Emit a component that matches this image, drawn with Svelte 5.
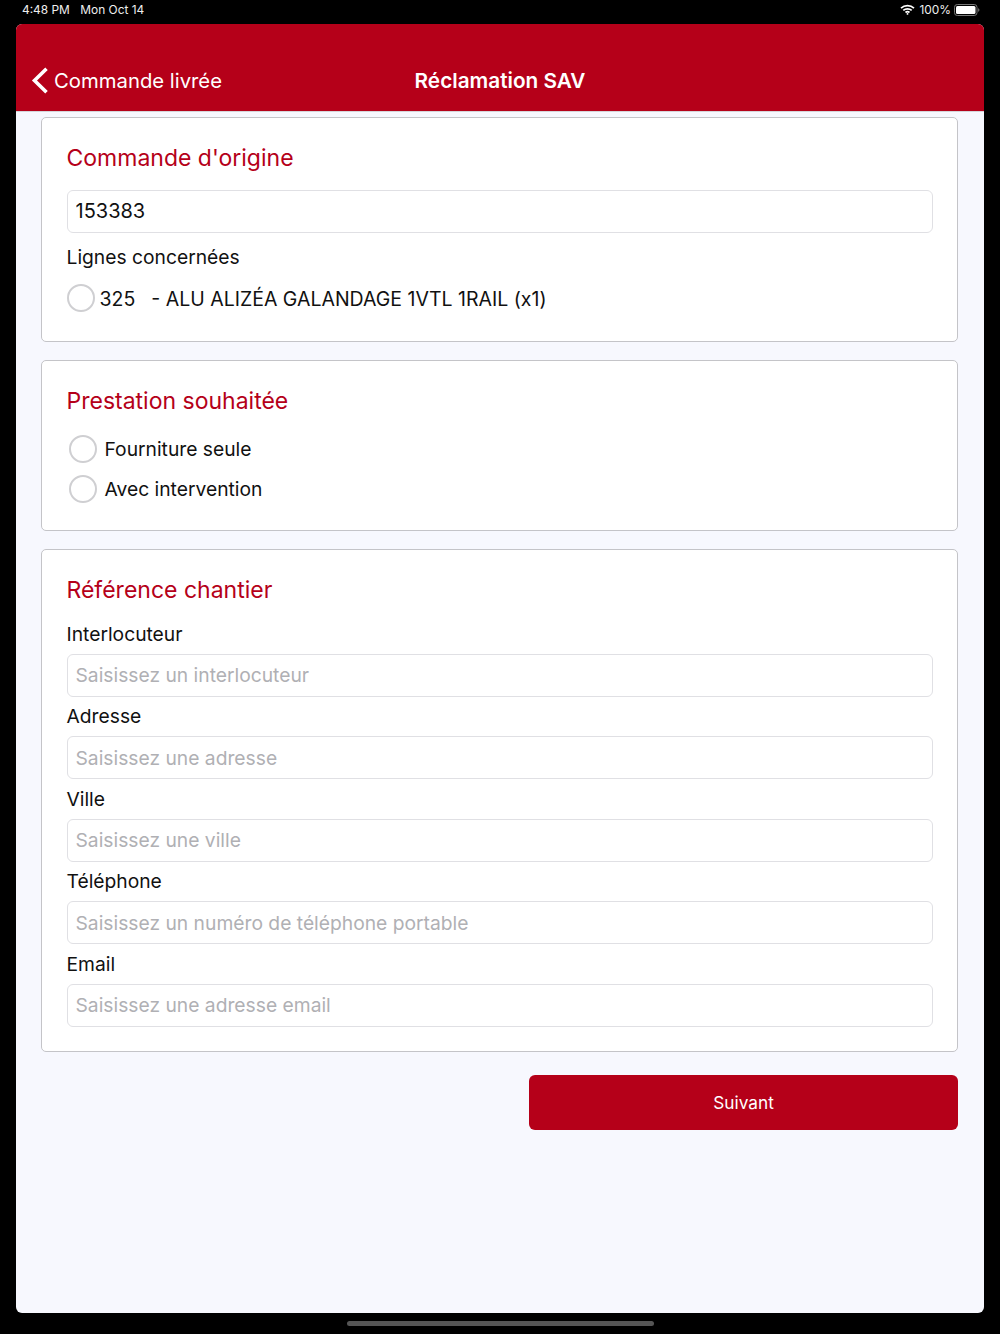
<script lang="ts">
  const lignes = [{ code: '325', label: '- ALU ALIZÉA GALANDAGE 1VTL 1RAIL (x1)' }]
  const prestations = ['Fourniture seule', 'Avec intervention']
  const champs = [
    { label: 'Interlocuteur', placeholder: 'Saisissez un interlocuteur' },
    { label: 'Adresse', placeholder: 'Saisissez une adresse' },
    { label: 'Ville', placeholder: 'Saisissez une ville' },
    { label: 'Téléphone', placeholder: 'Saisissez un numéro de téléphone portable' },
    { label: 'Email', placeholder: 'Saisissez une adresse email' },
  ]
</script>

<div class="device">
  <div class="statusbar">
    <div class="status-left">
      <span>4:48 PM</span>
      <span>Mon Oct 14</span>
    </div>
    <div class="status-right">
      <svg class="wifi" width="15" height="11" viewBox="0 0 15 11" fill="none" stroke="#fff" stroke-width="1.7">
        <path d="M1 4.1C4.6 .8 10.4 .8 14 4.1" />
        <path d="M3.3 6.4C5.6 4.3 9.4 4.3 11.7 6.4" />
        <path d="M5.5 8.5C6.6 7.6 8.4 7.6 9.5 8.5" />
        <circle cx="7.5" cy="9.9" r=".9" fill="#fff" stroke="none" />
      </svg>
      <span>100%</span>
      <svg class="battery" width="26" height="12" viewBox="0 0 26 12">
        <rect x=".5" y=".5" width="22.5" height="11" rx="2.8" fill="none" stroke="#777" />
        <rect x="2" y="2" width="19.5" height="8" rx="1.5" fill="#fff" />
        <path d="M24.2 4.2c.8.3 1.2 1 1.2 1.8s-.4 1.5-1.2 1.8z" fill="#777" />
      </svg>
    </div>
  </div>

  <div class="window">
    <header class="navbar">
      <div class="back">
        <svg width="18" height="27" viewBox="0 0 18 27" fill="none" stroke="#fff" stroke-width="3.6">
          <path d="M15.5 1.8 3.5 13.5l12 11.7" />
        </svg>
        <span>Commande livrée</span>
      </div>
      <h1>Réclamation SAV</h1>
    </header>

    <main class="content">
      <section class="card origine">
        <h2>Commande d'origine</h2>
        <input class="field value" readonly value="153383" />
        <div class="label lignes">Lignes concernées</div>
        {#each lignes as ligne}
          <div class="ligne">
            <span class="radio"></span>
            <span class="code">{ligne.code}</span>
            <span>{ligne.label}</span>
          </div>
        {/each}
      </section>

      <section class="card prestation">
        <h2>Prestation souhaitée</h2>
        <div class="options">
          {#each prestations as p}
            <div class="option">
              <span class="radio"></span>
              <span>{p}</span>
            </div>
          {/each}
        </div>
      </section>

      <section class="card chantier">
        <h2>Référence chantier</h2>
        <div class="fields">
          {#each champs as c}
            <div class="group">
              <div class="label">{c.label}</div>
              <input class="field" placeholder={c.placeholder} />
            </div>
          {/each}
        </div>
      </section>

      <div class="actions">
        <button class="next">Suivant</button>
      </div>
    </main>
  </div>

  <div class="homebar"><span></span></div>
</div>

<style>
  :global(body) {
    margin: 0;
    background: #000;
  }

  .device {
    display: flex;
    flex-direction: column;
    height: 1334px;
    background: #000;
    font-family: Inter, "Liberation Sans", sans-serif;
    color: #111;
  }

  .statusbar {
    display: flex;
    justify-content: space-between;
    align-items: center;
    height: 19px;
    padding: 0 20px 0 22px;
    margin-bottom: 5px;
    font-size: 11.9px;
    color: #eee;
    flex-shrink: 0;
  }

  .status-left {
    display: flex;
    gap: 10.5px;
  }

  .status-right {
    display: flex;
    align-items: center;
    gap: 4px;
  }

  .battery {
    margin-left: -1px;
  }

  .window {
    flex: 1;
    display: flex;
    flex-direction: column;
    margin: 0 16px;
    background: #f7f8fe;
    border-radius: 6px;
    overflow: hidden;
  }

  .navbar {
    position: relative;
    display: flex;
    align-items: center;
    justify-content: center;
    box-sizing: border-box;
    height: 88px;
    padding-top: 25px;
    background: #b50019;
    border-bottom: 1px solid #d5d5da;
    color: #fff;
    flex-shrink: 0;
  }

  .back {
    position: absolute;
    left: 15px;
    top: 43px;
    display: flex;
    align-items: center;
    gap: 5px;
    font-size: 20.3px;
    line-height: 27px;
  }

  .navbar h1 {
    margin: 0;
    font-size: 20.75px;
    font-weight: 600;
  }

  .content {
    padding: 5px 26px 0 25px;
  }

  .card {
    box-sizing: border-box;
    padding: 25px 24px 0 24.5px;
    background: #fff;
    border: 1.5px solid #c4c4c8;
    border-radius: 5px;
  }

  .card + .card {
    margin-top: 18px;
  }

  .origine {
    height: 225px;
  }

  .prestation {
    height: 171px;
  }

  .chantier {
    height: 503px;
  }

  h2 {
    margin: 0;
    font-size: 23px;
    font-weight: 400;
    line-height: 30px;
    color: #b50019;
  }

  .label {
    font-size: 19.25px;
    line-height: 24px;
    color: #111;
    position: relative;
    top: .5px;
  }

  .field {
    display: block;
    box-sizing: border-box;
    width: 100%;
    height: 43px;
    padding: 0 8px;
    background: #fff;
    border: 1px solid #e0e0e4;
    border-radius: 6px;
    outline: none;
    font: inherit;
    font-size: 19.25px;
    color: #111;
  }

  .field::placeholder {
    color: #b0b0b4;
    opacity: 1;
  }

  .value {
    margin-top: 17px;
    font-size: 20px;
    padding-bottom: 2px;
  }

  .lignes {
    margin-top: 11px;
  }

  .ligne {
    display: flex;
    align-items: center;
    margin-top: 16px;
    height: 28px;
    font-size: 19.5px;
    line-height: 30px;
  }

  .ligne span:not(.radio) {
    padding-top: 2px;
  }

  .code {
    margin: 0 16px 0 5px;
  }

  .radio {
    box-sizing: border-box;
    width: 28px;
    height: 28px;
    border: 2px solid #cfcfd2;
    border-radius: 50%;
    background: #fff;
    flex-shrink: 0;
  }

  .options {
    margin-top: 13px;
  }

  .option {
    display: flex;
    align-items: center;
    gap: 8px;
    height: 40px;
    padding-left: 2px;
    font-size: 19.25px;
  }

  .fields {
    margin-top: 16px;
    display: flex;
    flex-direction: column;
    gap: 7px;
  }

  .group .field {
    margin-top: 8.5px;
  }

  .actions {
    display: flex;
    justify-content: flex-end;
    margin-top: 23px;
  }

  .next {
    width: 429px;
    height: 55px;
    border: none;
    border-radius: 6px;
    background: #b50019;
    color: #fff;
    font: inherit;
    font-size: 17.25px;
  }

  .homebar {
    display: flex;
    justify-content: center;
    align-items: flex-start;
    height: 21px;
    padding-top: 8px;
    box-sizing: border-box;
    flex-shrink: 0;
  }

  .homebar span {
    width: 307px;
    height: 5px;
    border-radius: 3px;
    background: #555;
  }
</style>
